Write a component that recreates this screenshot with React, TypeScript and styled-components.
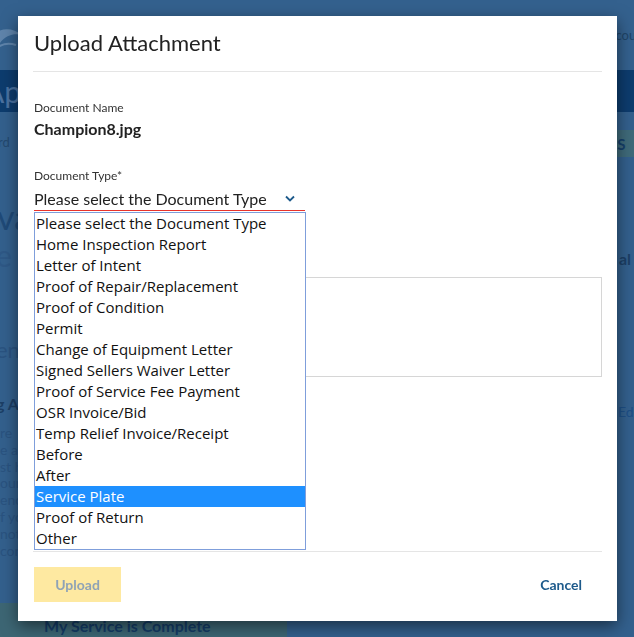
import React from "react";
import styled, { createGlobalStyle } from "styled-components";

const Global = createGlobalStyle`
  html, body { margin: 0; padding: 0; }
  body {
    width: 634px; height: 637px; overflow: hidden;
    font-family: Lato, "Open Sans", sans-serif;
    background: #33608d;
  }
`;

/* ---------- dimmed background page ---------- */
const Page = styled.div`
  width: 634px;
  height: 637px;
  display: flex;
  flex-direction: column;
  background: #33608d;
  color: #1c3f66;
  overflow: hidden;
`;
const Header = styled.div`
  height: 70px;
  flex: none;
  background: #34618e;
  display: flex;
  align-items: center;
  justify-content: space-between;
`;
const Logo = styled.svg`
  margin-left: -14px;
  opacity: 0.5;
`;
const HeaderLink = styled.span`
  font-size: 13px;
  color: #1f4569;
  margin-right: -14px;
`;
const Nav = styled.div`
  height: 42px;
  flex: none;
  background: #0d3c6e;
  display: flex;
  align-items: center;
`;
const NavTitle = styled.span`
  font-size: 30px;
  color: #4a71a0;
  margin-left: -16px;
`;
const Content = styled.div`
  flex: 1;
  display: flex;
  justify-content: space-between;
  min-height: 0;
`;
const Col = styled.div<{ $right?: boolean }>`
  width: ${(p) => (p.$right ? "60px" : "300px")};
  display: flex;
  flex-direction: column;
  align-items: ${(p) => (p.$right ? "flex-end" : "flex-start")};
`;
const BgText = styled.div<{ $size: number; $top: number; $x?: number; $bold?: boolean; $color?: string }>`
  font-size: ${(p) => p.$size}px;
  margin-top: ${(p) => p.$top}px;
  margin-left: ${(p) => p.$x || 0}px;
  margin-right: ${(p) => -(p.$x || 0)}px;
  font-weight: ${(p) => (p.$bold ? 700 : 400)};
  color: ${(p) => p.$color || "#1c3f66"};
  white-space: nowrap;
  line-height: 1.2;
`;
const RightText = styled(BgText)`
  margin-left: 0;
  margin-right: ${(p) => p.$x || 0}px;
`;
const GreenBtn = styled.div`
  margin-top: auto;
  margin-bottom: -10px;
  width: 287px;
  height: 44px;
  flex: none;
  background: #3d6674;
  color: #143c66;
  font-weight: 700;
  font-size: 16px;
  display: flex;
  align-items: center;
  padding-left: 44px;
  box-sizing: border-box;
  white-space: nowrap;
`;
const SmallGreen = styled.div`
  margin-top: 18px;
  width: 60px;
  height: 27px;
  background: #3f6a7a;
  color: #15406a;
  font-weight: 700;
  font-size: 15px;
  display: flex;
  align-items: center;
  box-sizing: border-box;
  padding-left: 8px;
  margin-right: -20px;
  white-space: nowrap;
`;

/* ---------- modal ---------- */
const Modal = styled.div`
  position: fixed;
  left: 18px;
  top: 16px;
  width: 599px;
  height: 605px;
  background: #fff;
  box-shadow: 0 5px 15px rgba(0, 0, 0, 0.5);
  display: flex;
  flex-direction: column;
`;
const ModalHeader = styled.div`
  margin: 0 15px;
  padding: 14px 1px 15px;
  border-bottom: 1px solid #e5e5e5;
`;
const Title = styled.h2`
  margin: 0;
  font-family: Lato, sans-serif;
  font-weight: 400;
  font-size: 22px;
  line-height: 26px;
  color: #222;
`;
const Body = styled.div`
  position: relative;
  height: 479px;
  box-sizing: border-box;
  padding: 28px 15px 0 16px;
  display: flex;
  flex-direction: column;
`;
const Label = styled.div`
  font-size: 12px;
  line-height: 15px;
  color: #333;
`;
const FileName = styled.div`
  font-size: 16px;
  font-weight: 700;
  line-height: 20px;
  margin-top: 4px;
  color: #222;
`;
const FieldLabel = styled(Label)`
  margin-top: 29px;
`;
const SelectBox = styled.div`
  margin-top: 3px;
  width: 271px;
  height: 24px;
  border-bottom: 1px solid #e8332b;
  display: flex;
  align-items: center;
  justify-content: space-between;
  font-size: 16px;
  color: #222;
`;
const Chevron = styled.svg`
  margin-right: 10px;
`;
const TextArea = styled.div`
  margin-top: 66px;
  height: 98px;
  border: 1px solid #d6d6d6;
`;
const ListBox = styled.ul`
  position: absolute;
  left: 16px;
  top: 140px;
  width: 270px;
  margin: 0;
  padding: 0;
  list-style: none;
  border: 1px solid #7f9edb;
  background: #fff;
  z-index: 2;
`;
const Option = styled.li<{ $active?: boolean }>`
  height: 21px;
  line-height: 21px;
  padding-left: 1px;
  font-family: "Open Sans", sans-serif;
  font-size: 15px;
  white-space: nowrap;
  color: ${(p) => (p.$active ? "#fff" : "#111")};
  background: ${(p) => (p.$active ? "#1e90ff" : "transparent")};
`;
const Footer = styled.div`
  margin: 0 15px;
  padding: 15px 0 0 1px;
  border-top: 1px solid #e5e5e5;
  display: flex;
  justify-content: space-between;
  align-items: flex-start;
`;
const UploadBtn = styled.button`
  width: 87px;
  height: 35px;
  border: none;
  background: #fee9a1;
  color: #8fa3b6;
  font-family: Lato, sans-serif;
  font-weight: 700;
  font-size: 14px;
  padding: 0;
`;
const CancelBtn = styled.button`
  border: none;
  background: none;
  color: #1d5a8b;
  font-family: Lato, sans-serif;
  font-weight: 700;
  font-size: 14px;
  height: 35px;
  padding: 0 20px 0 0;
`;

const options = [
  "Please select the Document Type",
  "Home Inspection Report",
  "Letter of Intent",
  "Proof of Repair/Replacement",
  "Proof of Condition",
  "Permit",
  "Change of Equipment Letter",
  "Signed Sellers Waiver Letter",
  "Proof of Service Fee Payment",
  "OSR Invoice/Bid",
  "Temp Relief Invoice/Receipt",
  "Before",
  "After",
  "Service Plate",
  "Proof of Return",
  "Other",
];

const para = ["re", "e a", "st h", "our", "ency", "f yo", "not", "con"];

export default function App() {
  return (
    <>
      <Global />
      <Page>
        <Header>
          <Logo width="40" height="40" viewBox="0 0 40 40">
            <path d="M4 22 C14 12, 26 12, 36 20 C28 18, 20 20, 14 28 C12 24, 8 22, 4 22 Z" fill="#8aa8c8" />
            <path d="M12 32 C18 28, 24 28, 30 30" stroke="#8aa8c8" strokeWidth="2" fill="none" />
          </Logo>
          <HeaderLink>Account</HeaderLink>
        </Header>
        <Nav>
          <NavTitle>Apo</NavTitle>
        </Nav>
        <Content>
          <Col>
            <BgText $size={13} $top={23} $x={-2} $color="#24496f">rd</BgText>
            <BgText $size={34} $top={46} $x={-3} $color="#1f4a78">va</BgText>
            <BgText $size={30} $top={0} $x={-4} $color="#2e5886">e Fee</BgText>
            <BgText $size={22} $top={64} $x={-4} $color="#2a5380">ent</BgText>
            <BgText $size={16} $top={30} $x={-4} $bold>g A</BgText>
            {para.map((t, i) => (
              <BgText key={i} $size={14} $top={i === 0 ? 12 : 0} $x={0} $color="#2a5380">
                {t}
              </BgText>
            ))}
            <GreenBtn>My Service is Complete</GreenBtn>
          </Col>
          <Col $right>
            <SmallGreen>w S</SmallGreen>
            <RightText $size={16} $top={92} $x={-10} $bold>al F</RightText>
            <RightText $size={14} $top={136} $x={-8} $color="#1d4f86">Edit</RightText>
          </Col>
        </Content>
      </Page>

      <Modal>
        <ModalHeader>
          <Title>Upload Attachment</Title>
        </ModalHeader>
        <Body>
          <Label>Document Name</Label>
          <FileName>Champion8.jpg</FileName>
          <FieldLabel>Document Type*</FieldLabel>
          <SelectBox>
            <span>Please select the Document Type</span>
            <Chevron width="10" height="7" viewBox="0 0 10 7">
              <path d="M1 1.5 L5 5.5 L9 1.5" stroke="#1d5a8b" strokeWidth="1.8" fill="none" />
            </Chevron>
          </SelectBox>
          <TextArea />
          <ListBox>
            {options.map((o) => (
              <Option key={o} $active={o === "Service Plate"}>
                {o}
              </Option>
            ))}
          </ListBox>
        </Body>
        <Footer>
          <UploadBtn>Upload</UploadBtn>
          <CancelBtn>Cancel</CancelBtn>
        </Footer>
      </Modal>
    </>
  );
}
